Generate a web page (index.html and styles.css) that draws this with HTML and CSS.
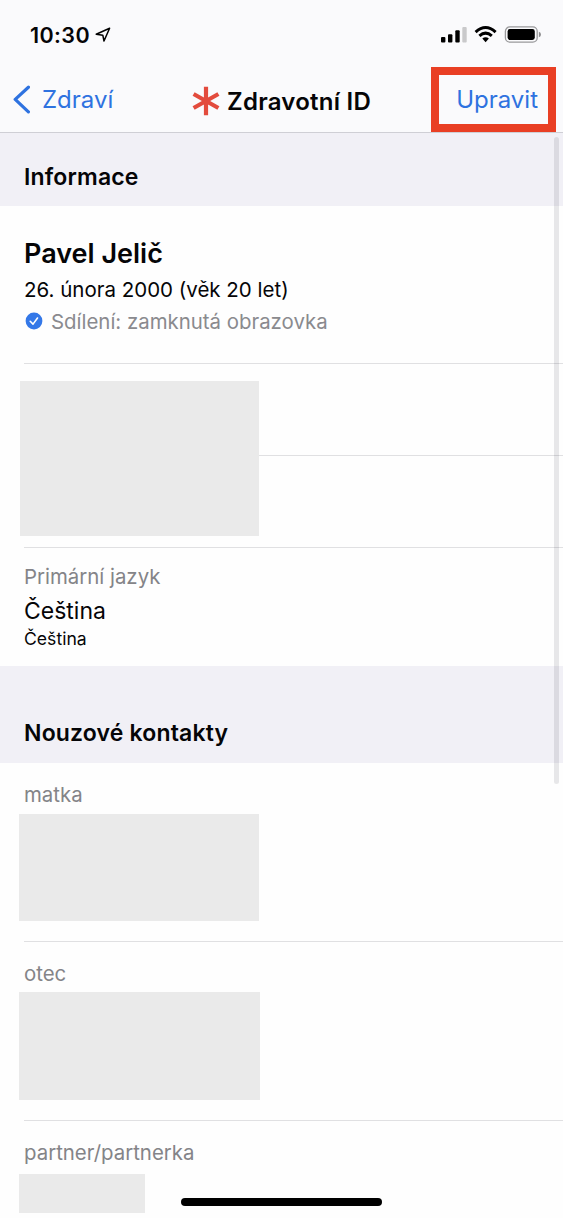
FILE: index.html
```html
<!DOCTYPE html>
<html lang="cs">
<head>
<meta charset="utf-8">
<title>Zdravotní ID</title>
<link rel="stylesheet" href="styles.css">
</head>
<body>
<div class="screen">
  <header class="top">
    <div class="status">
      <span class="time">10:30</span>
      <svg class="location" width="16" height="16" viewBox="0 0 16 16"><path d="M14.6 1.2 1.2 7.2 7.8 8.2 9 14Z" fill="none" stroke="#000" stroke-width="1.5" stroke-linejoin="round"/></svg>
      <svg class="indicators" width="102" height="20" viewBox="0 0 102 20">
        <rect x="1" y="12" width="4.4" height="5.4" rx="1"/>
        <rect x="8" y="9.2" width="4.4" height="8.2" rx="1"/>
        <rect x="15.3" y="5.2" width="4.4" height="12.2" rx="1"/>
        <rect x="22.3" y="2" width="4.4" height="15.4" rx="1" fill="#c9c9cb"/>
        <g fill="none" stroke="#000" stroke-width="3"><path d="M35.6 7.1Q45.6-2.1 55.6 7.1"/><path d="M39.4 10.9Q45.6 5.4 51.8 10.9"/></g>
        <path d="M42.3 13.6Q45.6 10.9 48.9 13.6L45.6 17.2Z"/>
        <rect x="65.4" y="1.9" width="31.8" height="15.2" rx="4.4" fill="none" stroke="#99999b" stroke-width="1.3"/>
        <rect x="67.6" y="4" width="27.2" height="11" rx="2.4"/>
        <path d="M98.9 6.8Q101 7.4 101 9.5T98.9 12.2Z" fill="#8e8e90"/>
      </svg>
    </div>
    <nav class="nav">
      <a class="back"><svg width="18" height="30" viewBox="0 0 18 30"><path d="M16.4 3.2 3.2 15.4 16.4 27.8" fill="none" stroke="#2e72e0" stroke-width="3.2" stroke-linecap="round" stroke-linejoin="round"/></svg><span>Zdraví</span></a>
      <h1 class="title"><svg width="28" height="30" viewBox="0 0 28 30"><path d="M14 .8V29.2M1.6 8 26.4 22M1.6 22 26.4 8" stroke="#e34b3d" stroke-width="4.2"/></svg><span>Zdravotní ID</span></h1>
      <a class="edit"><span>Upravit</span></a>
    </nav>
  </header>
  <main>
    <h2 class="section">Informace</h2>
    <section class="profile inset">
      <h3 class="name">Pavel Jelič</h3>
      <p class="birth">26. února 2000 (věk 20 let)</p>
      <p class="sharing"><svg width="18" height="18" viewBox="0 0 18 18"><circle cx="9" cy="9" r="8.4" fill="#3478e8"/><path d="M5.2 9.3 8 12.1 12.5 6" fill="none" stroke="#fff" stroke-width="1.6" stroke-linecap="round" stroke-linejoin="round"/></svg><span>Sdílení: zamknutá obrazovka</span></p>
    </section>
    <section class="hidden-rows">
      <div class="redacted"></div><div class="divider"></div>
    </section>
    <section class="language inset">
      <p class="label primary">Primární jazyk</p>
      <p class="value">Čeština</p>
      <p class="native">Čeština</p>
    </section>
    <h2 class="section contacts">Nouzové kontakty</h2>
    <section class="contact"><p class="label">matka</p><div class="redacted"></div></section>
    <section class="contact father"><p class="label">otec</p><div class="redacted"></div></section>
    <section class="contact partner"><p class="label">partner/partnerka</p><div class="redacted"></div></section>
  </main>
  <div class="scrollbar"></div>
  <div class="home"></div>
</div>
</body>
</html>
```
FILE: styles.css
```css
* { box-sizing: border-box; }
body { margin: 0; background: #fefefe; }
h1, h2, h3, p { margin: 0; font-weight: 400; }
.screen { position: relative; width: 563px; height: 1218px; overflow: hidden; font-family: Inter, "Liberation Sans", sans-serif; color: #050507; white-space: nowrap; }
svg { display: block; flex: none; }
.top { height: 133px; background: #fafafc; border-bottom: 1px solid #cfcfd5; }
.status { display: flex; height: 67px; align-items: center; padding: 2px 21px 0 30px; }
.time { font-size: 21.5px; font-weight: 600; letter-spacing: .4px; }
.location { margin-left: 5px; }
.indicators { margin-left: auto; }
.nav { display: grid; grid-template-columns: 192px 239px 125px; height: 65px; }
.back { display: flex; align-items: center; gap: 12px; padding: 0 0 1px 12px; font-size: 24px; color: #2e72e0; }
.title { display: flex; align-items: center; gap: 7px; padding-top: 4px; font-size: 24px; font-weight: 600; letter-spacing: .25px; }
.title svg { margin-top: -1px; }
.edit { display: flex; align-items: center; justify-content: flex-end; padding: 0 10px 1px 0; border: 8px solid #e93f24; font-size: 24px; color: #2e72e0; }
.section { height: 73px; padding: 15px 0 0 24px; background: #f1f0f6; font-size: 23px; font-weight: 600; letter-spacing: .17px; line-height: 59px; }
.section.contacts { height: 97px; padding-top: 38px; }
.inset { margin-left: 24px; }
.profile { height: 158px; padding-top: 29px; border-bottom: 1px solid #e0e0e2; }
.name { font-size: 27px; font-weight: 600; line-height: 38px; }
.birth { font-size: 20.5px; line-height: 34px; }
.sharing { display: flex; align-items: center; gap: 8px; height: 28px; font-size: 20.4px; color: #8a8a8e; }
.sharing svg { margin-left: 1px; }
.hidden-rows { display: flex; align-items: flex-start; height: 183px; padding: 17px 0 0 20px; }
.hidden-rows .redacted { width: 239px; height: 155px; }
.divider { flex: 1; margin-top: 74px; border-top: 1px solid #e0e0e2; }
.redacted { background: #eaeaea; }
.language { height: 119px; padding-top: 14px; border-top: 1px solid #e0e0e2; }
.label { font-size: 20.4px; line-height: 30px; color: #848488; }
.value { padding-top: 1px; font-size: 23px; line-height: 37px; }
.native { font-size: 17.6px; line-height: 17px; }
.contact { height: 178px; padding: 17px 0 0 19px; }
.contact .label { padding-left: 5px; }
.contact .redacted { width: 240px; height: 107px; margin-top: 4px; }
.contact.father, .contact.partner { height: 179px; padding-top: 18px; background: linear-gradient(#e0e0e2, #e0e0e2) 24px 0 / 100% 1px no-repeat; }
.contact.father .redacted { width: 241px; height: 108px; margin-top: 3px; }
.contact.partner .redacted { width: 126px; height: 39px; margin-top: 6px; }
.scrollbar { position: absolute; top: 137px; left: 554px; width: 5px; height: 647px; border-radius: 3px; background: rgba(0, 0, 20, .09); }
.home { position: absolute; left: 181px; top: 1198px; width: 201px; height: 8px; border-radius: 4px; background: #000; }
```
